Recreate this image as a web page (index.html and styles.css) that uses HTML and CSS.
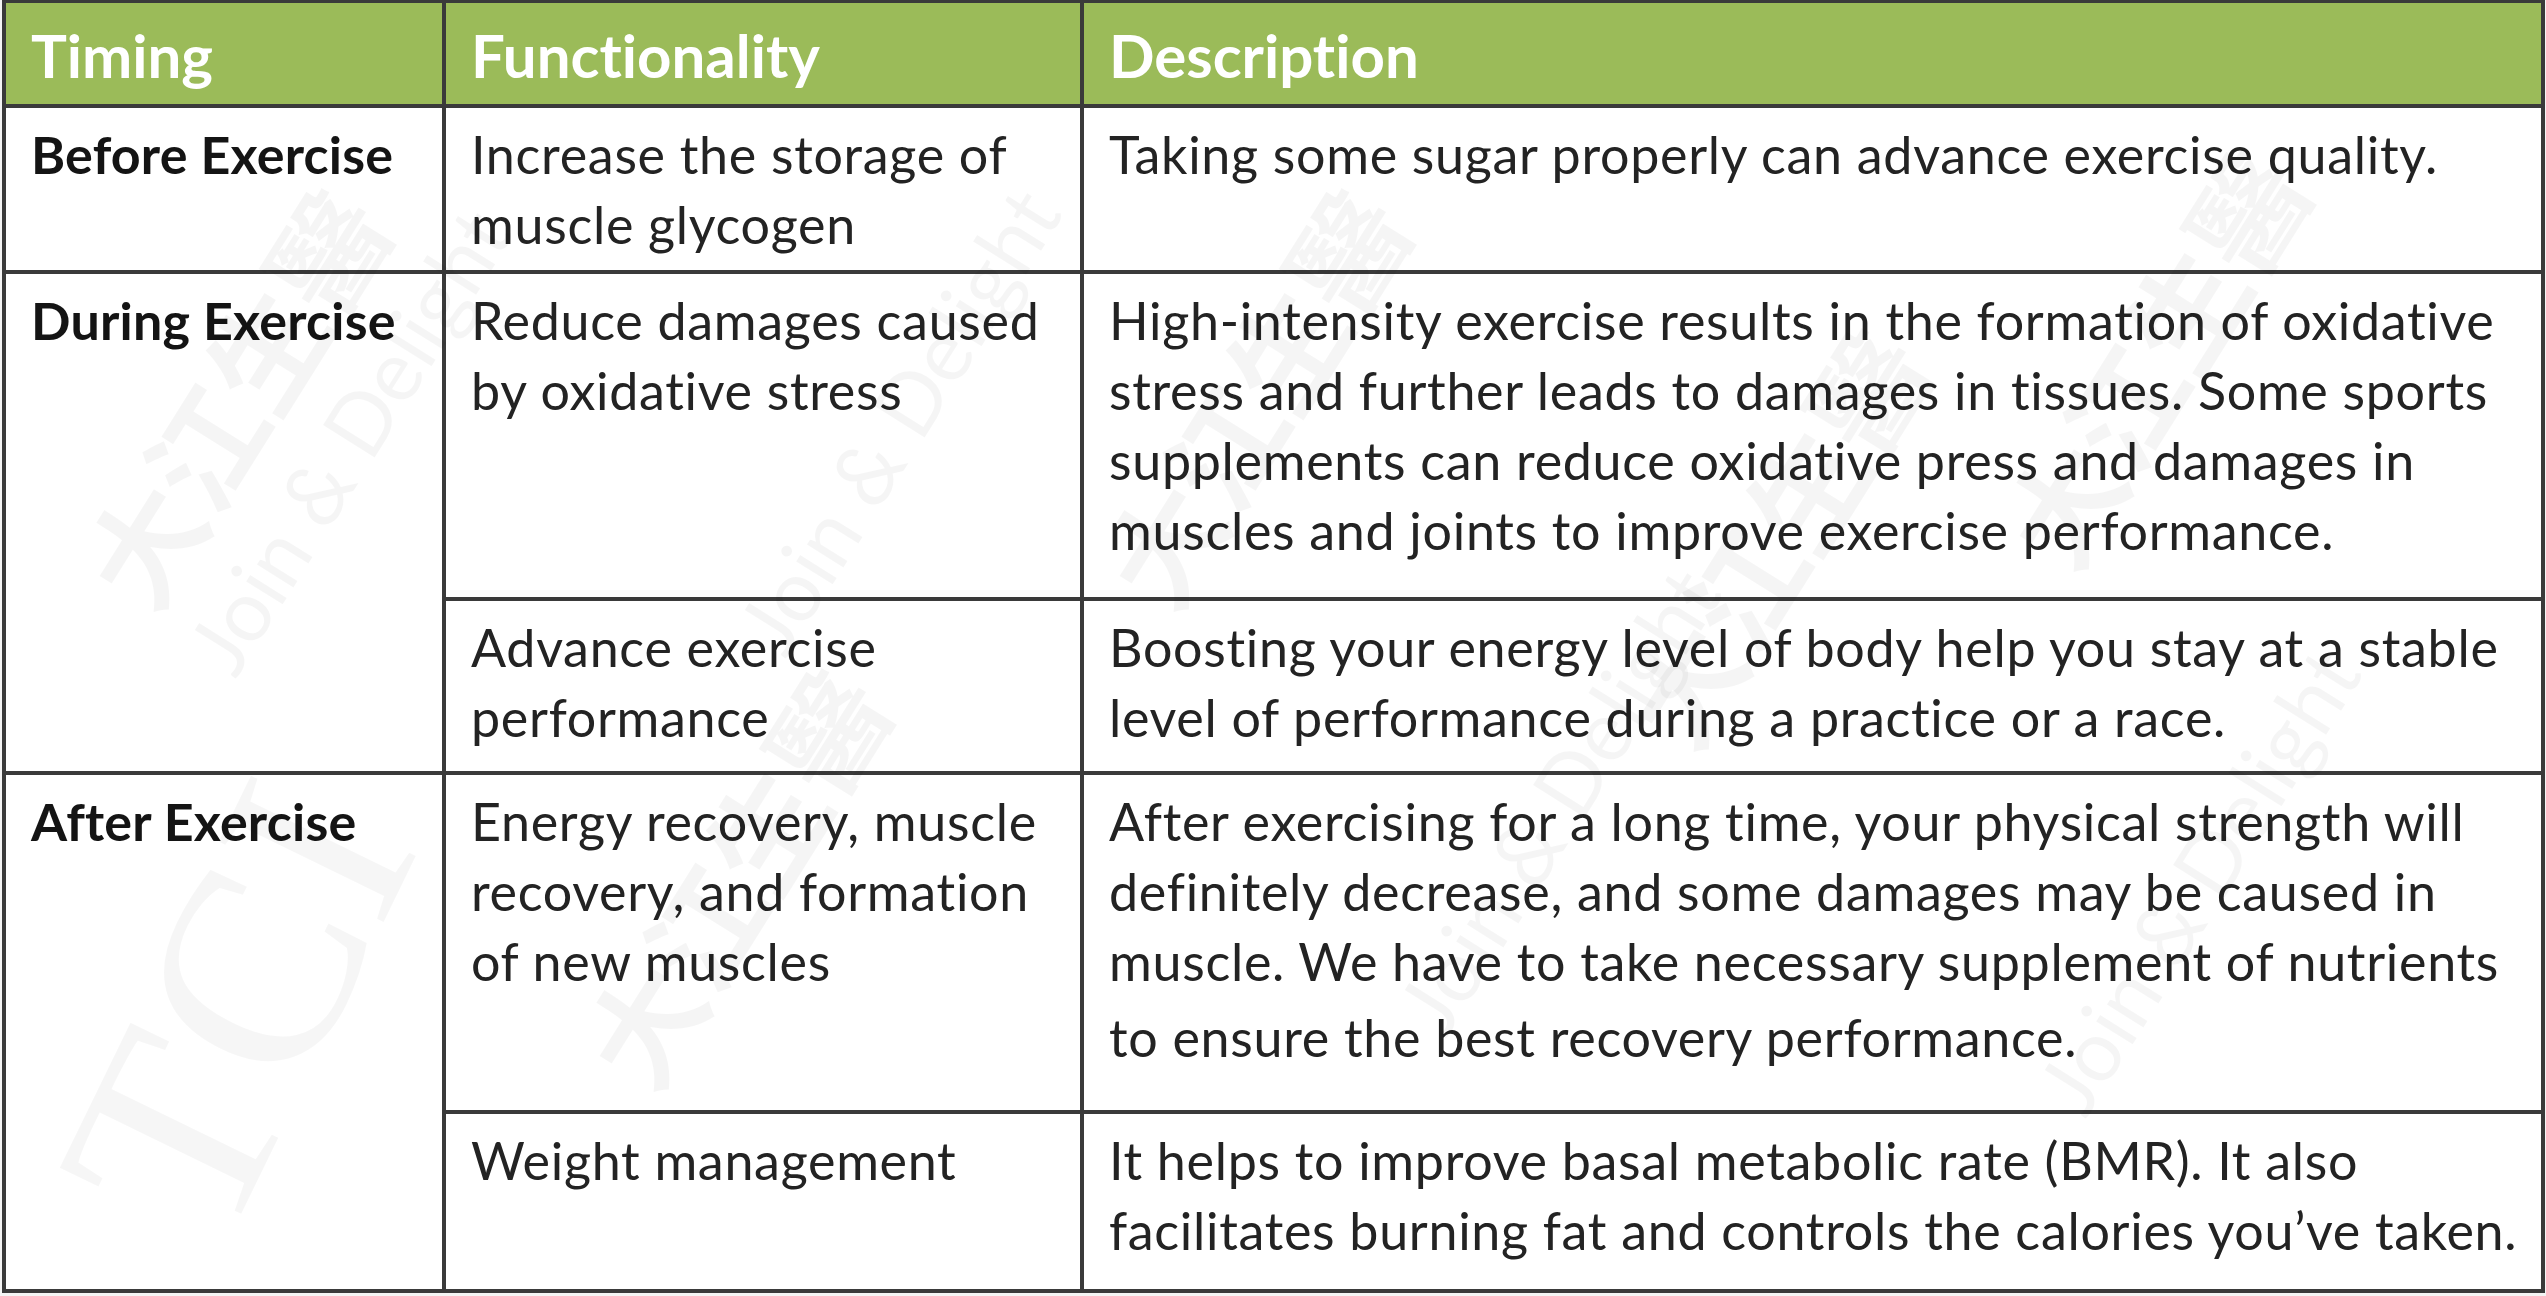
FILE: index.html
```html
<!DOCTYPE html>
<html lang="en">
<head>
<meta charset="utf-8">
<title>Sports supplements timing</title>
<link rel="stylesheet" href="styles.css">
</head>
<body>
<div class="page">
  <div class="sheet">
    <div class="grid">
      <div class="cell head">Timing</div>
      <div class="cell head">Functionality</div>
      <div class="cell head">Description</div>

      <div class="cell timing">Before Exercise</div>
      <div class="cell">Increase the storage of<br>muscle glycogen</div>
      <div class="cell">Taking some sugar properly can advance exercise quality.</div>

      <div class="cell timing span2">During Exercise</div>
      <div class="cell">Reduce damages caused<br>by oxidative stress</div>
      <div class="cell">High-intensity exercise results in the formation of oxidative<br>stress and further leads to damages in tissues. Some sports<br>supplements can reduce oxidative press and damages in<br>muscles and joints to improve exercise performance.</div>
      <div class="cell">Advance exercise<br>performance</div>
      <div class="cell">Boosting your energy level of body help you stay at a stable<br>level of performance during a practice or a race.</div>

      <div class="cell timing span2">After Exercise</div>
      <div class="cell">Energy recovery, muscle<br>recovery, and formation<br>of new muscles</div>
      <div class="cell">After exercising for a long time, your physical strength will<br>definitely decrease, and some damages may be caused in<br>muscle. We have to take necessary supplement of nutrients<br><span class="lastline">to ensure the best recovery performance.</span></div>
      <div class="cell">Weight management</div>
      <div class="cell">It helps to improve basal metabolic rate (BMR). It also<br>facilitates burning fat and controls the calories you’ve taken.</div>
    </div>

    <div class="watermark" aria-hidden="true">
      <span class="wm wm-tci" style="left:10px;top:1150px">TCI</span>
      <span class="wm wm-cn" style="left:60px;top:560px">大江生醫</span>
      <span class="wm wm-en" style="left:170px;top:640px">Join &amp; Delight</span>
      <span class="wm wm-cn" style="left:560px;top:1040px">大江生醫</span>
      <span class="wm wm-en" style="left:720px;top:620px">Join &amp; Delight</span>
      <span class="wm wm-cn" style="left:1080px;top:560px">大江生醫</span>
      <span class="wm wm-en" style="left:1380px;top:1000px">Join &amp; Delight</span>
      <span class="wm wm-cn" style="left:1600px;top:700px">大江生醫</span>
      <span class="wm wm-cn" style="left:1980px;top:520px">大江生醫</span>
      <span class="wm wm-en" style="left:2020px;top:1080px">Join &amp; Delight</span>
    </div>
  </div>
</div>
</body>
</html>
```
FILE: styles.css
```css
html, body {
  margin: 0;
  padding: 0;
  background: #f4f4f4;
}

.page {
  width: 2546px;
  height: 1296px;
  overflow: hidden;
}

.sheet {
  position: relative;
  margin-left: 2px;
  width: 2543px;
}

.grid {
  display: grid;
  grid-template-columns: 436px 634px 1457px;
  grid-template-rows: 101px 162px 323px 170px 335px 175px;
  gap: 4px;
  padding: 3px 4px 4px 4px;
  background: #3a3a3a;
  font-family: "Lato", "Liberation Sans", "Noto Sans CJK TC", sans-serif;
  font-variant-ligatures: none;
}

.cell {
  background: #ffffff;
  color: #232323;
  font-size: 52px;
  letter-spacing: 0.7px;
  line-height: 70px;
  padding: 11px 10px 0 25px;
  white-space: nowrap;
}

.head {
  background: #9bbb59;
  color: #ffffff;
  font-weight: 700;
  font-size: 60px;
  letter-spacing: 0;
  line-height: 72px;
  padding-top: 16px;
}

.timing {
  font-weight: 700;
  color: #141414;
  letter-spacing: 0.2px;
}

.span2 {
  grid-row: span 2;
}

.lastline {
  display: inline-block;
  margin-top: 6px;
}

.watermark {
  position: absolute;
  inset: 0;
  pointer-events: none;
  overflow: hidden;
}

.wm {
  position: absolute;
  white-space: nowrap;
  transform-origin: 0 0;
  transform: rotate(-58deg);
  color: rgba(0, 0, 0, 0.04);
  line-height: 1;
}

.wm-cn {
  font-family: "Noto Sans CJK TC", "Noto Sans CJK SC", sans-serif;
  font-weight: 700;
  font-size: 115px;
}

.wm-en {
  font-family: "Lato", sans-serif;
  font-size: 85px;
}

.wm-tci {
  font-family: "Liberation Serif", serif;
  font-size: 280px;
  transform: rotate(-64deg);
  color: rgba(0, 0, 0, 0.035);
}
```
